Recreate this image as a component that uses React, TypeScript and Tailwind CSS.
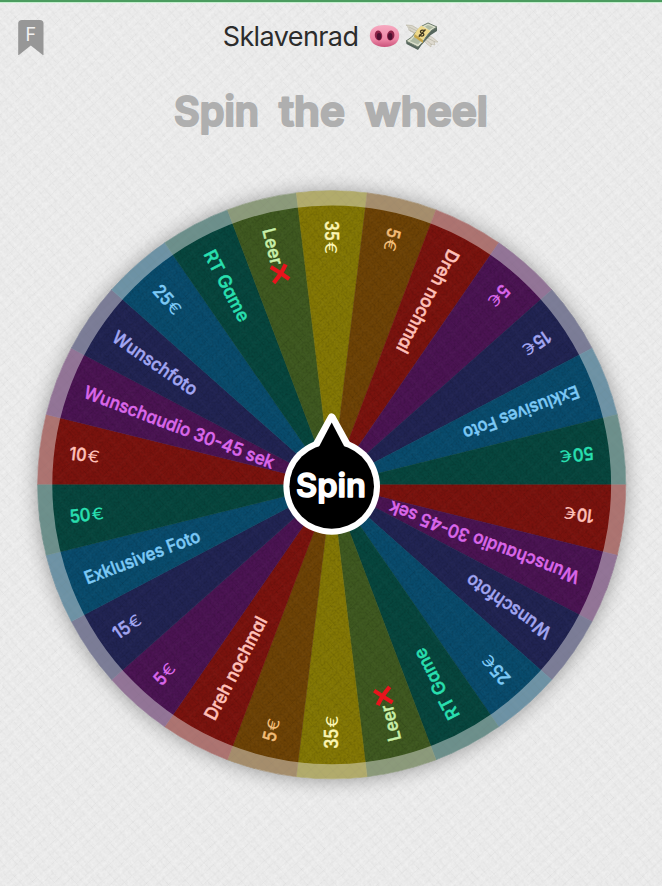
import React from "react";

type Tone = { fill: string; text: string };

const tones: Record<string, Tone> = {
  red: { fill: "#7b130e", text: "#ffc1b9" },
  purple: { fill: "#4b1453", text: "#da67ea" },
  navy: { fill: "#212453", text: "#a2a6f2" },
  blue: { fill: "#094c6d", text: "#7cc9f6" },
  teal: { fill: "#07463e", text: "#29dfaf" },
  green: { fill: "#3f5920", text: "#c9f0aa" },
  yellow: { fill: "#847805", text: "#fcf6b4" },
  brown: { fill: "#6e4306", text: "#f2bd79" },
};

type Slice = { label: string; length: number; tone: string; euro?: boolean; cross?: boolean };

const slices: Slice[] = [
  { label: "10", length: 17, tone: "red", euro: true },
  { label: "Wunschaudio 30-45 sek", length: 202, tone: "purple" },
  { label: "Wunschfoto", length: 99, tone: "navy" },
  { label: "25", length: 20, tone: "blue", euro: true },
  { label: "RT Game", length: 78, tone: "teal" },
  { label: "Leer", length: 37, tone: "green", cross: true },
  { label: "35", length: 20, tone: "yellow", euro: true },
  { label: "5", length: 10, tone: "brown", euro: true },
  { label: "Dreh nochmal", length: 114, tone: "red" },
  { label: "5", length: 10, tone: "purple", euro: true },
  { label: "15", length: 17, tone: "navy", euro: true },
  { label: "Exklusives Foto", length: 122.5, tone: "blue" },
  { label: "50", length: 21, tone: "teal", euro: true },
];

const CX = 331.7;
const CY = 324.8;
const R = 294;
const STEP = 360 / 26;
const half = ((STEP / 2) * Math.PI) / 180;
const wedge = `M0 0L${-R * Math.cos(half)} ${-R * Math.sin(half)}A${R} ${R} 0 0 0 ${-R * Math.cos(half)} ${R * Math.sin(half)}Z`;

function Wedge({ slice, index }: { slice: Slice; index: number }) {
  const tone = tones[slice.tone];
  return (
    <g transform={`translate(${CX} ${CY}) rotate(${(index + 0.5) * STEP})`}>
      <path d={wedge} fill={tone.fill} stroke={tone.fill} strokeWidth="0.4" />
    </g>
  );
}

function Label({ slice, index }: { slice: Slice; index: number }) {
  const tone = tones[slice.tone];
  return (
    <g transform={`translate(${CX} ${CY}) rotate(${(index + 0.5) * STEP})`} fill={tone.text}>
      <text
        x={-264}
        y={6.5}
        textLength={slice.length}
        lengthAdjust="spacingAndGlyphs"
        stroke={tone.text}
        strokeWidth="0.5"
        strokeLinejoin="round"
        className="font-['Inter',sans-serif] text-[18px] font-medium [font-feature-settings:'cv11']"
      >
        {slice.label}
      </text>
      {slice.euro && (
        <text
          x={-263 + slice.length}
          y={6.2}
          textLength={12.5}
          lengthAdjust="spacingAndGlyphs"
          className="font-['Inter',sans-serif] text-[16px] font-normal"
        >
          €
        </text>
      )}
      {slice.cross && (
        <path
          d="M-225 -8Q-217 -2 -210 8M-210 -8Q-219 0 -226 7"
          fill="none"
          stroke="#e8141c"
          strokeWidth="4.2"
        />
      )}
    </g>
  );
}

function Weave({ id, dark, light }: { id: string; dark: string; light: string }) {
  return (
    <pattern id={id} width="22" height="22" patternUnits="userSpaceOnUse" patternTransform="rotate(3)">
      <path
        d="M0 22L22 0M0 11L11 0M11 22L22 11M0 0L22 22M14 0L22 8M0 8L14 22"
        stroke={dark}
        strokeWidth="1"
        fill="none"
      />
      <path d="M0 16L16 0M16 22L22 16M5 0L22 17M0 17L5 22" stroke={light} strokeWidth="1.6" fill="none" />
    </pattern>
  );
}

function Wheel() {
  const all = [...slices, ...slices];
  return (
    <svg width="662" height="650" viewBox="0 0 662 650" className="block shrink-0">
      <defs>
        <Weave id="wheelWeave" dark="rgba(0,0,0,0.06)" light="rgba(255,255,255,0.012)" />
        <filter id="shade" x="-10%" y="-10%" width="120%" height="120%">
          <feGaussianBlur stdDeviation="10" />
        </filter>
        <filter id="grain" x="0" y="0" width="100%" height="100%">
          <feTurbulence type="fractalNoise" baseFrequency="0.5" numOctaves="2" seed="4" />
          <feColorMatrix values="0 0 0 0 0  0 0 0 0 0  0 0 0 0 0  0.9 0 0 0 -0.36" />
          <feComposite in2="SourceGraphic" operator="in" />
        </filter>
      </defs>
      <circle cx={CX} cy={CY + 1} r={R} fill="#000" opacity="0.36" filter="url(#shade)" />
      {all.map((s, i) => (
        <Wedge key={i} slice={s} index={i} />
      ))}
      <circle cx={CX} cy={CY} r={R} fill="url(#wheelWeave)" />
      <circle cx={CX} cy={CY} r="279.5" filter="url(#grain)" opacity="0.3" />
      <circle cx={CX} cy={CY} r="286.9" fill="none" stroke="#e8e8e8" strokeOpacity="0.45" strokeWidth="15" />
      {all.map((s, i) => (
        <Label key={i} slice={s} index={i} />
      ))}
      <path d="M331.7 257.500L348 287H315.400Z" fill="#fff" stroke="#fff" strokeWidth="8" strokeLinejoin="round" />
      <circle cx={CX} cy="326.5" r="48.3" fill="#fff" />
      <circle cx={CX} cy="326.5" r="42.3" />
      <path d="M331.7 262.500L344 286L347 292H316.400L319.400 286Z" />
      <text
        x="296"
        y="337"
        textLength="70"
        lengthAdjust="spacingAndGlyphs"
        fill="#fff"
        stroke="#fff"
        strokeWidth="1.400"
        strokeLinejoin="round"
        className="font-['Inter',sans-serif] text-[32px] font-semibold"
      >
        Spin
      </text>
    </svg>
  );
}

function Snout() {
  return (
    <svg width="31" height="24" viewBox="0 0 31 24">
      <defs>
        <linearGradient id="snout" x1="0" y1="0" x2="0" y2="1">
          <stop offset="0" stopColor="#f6a9c0" />
          <stop offset="0.65" stopColor="#ee87a6" />
          <stop offset="1" stopColor="#c9527a" />
        </linearGradient>
      </defs>
      <path d="M15.500 1C25 1 30.200 5 30.200 11.500S25 23 15.500 23S.8 18 .8 11.500S6 1 15.500 1Z" fill="url(#snout)" />
      <ellipse cx="9.500" cy="11.500" rx="3.700" ry="5" fill="#8d2347" transform="rotate(-8 9.500 11.500)" />
      <ellipse cx="21.700" cy="11.500" rx="3.700" ry="5" fill="#8d2347" transform="rotate(8 21.700 11.500)" />
      <ellipse cx="10" cy="12.500" rx="2.200" ry="3.400" fill="#4c1130" />
      <ellipse cx="21.200" cy="12.500" rx="2.200" ry="3.400" fill="#4c1130" />
    </svg>
  );
}

function FlyingMoney() {
  return (
    <svg width="34" height="29" viewBox="0 0 34 29">
      <path d="M1 3Q7 2 13 7L10 13Q8 9 5 9Q6 7 3 6Q4 4.500 1 3Z" fill="#d9d6ca" stroke="#bab6a5" strokeWidth="0.6" />
      <path d="M22 13Q27 14 33 20L29 20L30 23L26 22L26 25Q21 22 18 17Z" fill="#dedad0" stroke="#bdb8a8" strokeWidth="0.6" />
      <path d="M3 7.500L10 11M4 5L12 9M21 15L30 20M20 17L27 23" stroke="#aaa695" strokeWidth="0.5" />
      <path d="M1 19L1.500 22L13 28Q17 22 21 18Q26 12 32 9V5L20 9Z" fill="#56665d" />
      <path d="M1 19Q7 16 11 10Q16 3 23 1L32 5Q25 8 21 15Q18 21 13 25Z" fill="#dce0cc" stroke="#6f7e70" strokeWidth="1" />
      <path d="M4.500 19Q7 18 9 15L16 19L13 22.500ZM20 4.500L23 3L28.500 5.200L24 8Z" fill="#aebaa4" />
      <path d="M9.500 12Q13 6 16.500 3.800L25.500 9Q22 12 18 18Z" fill="#eed98c" />
      <path d="M9.500 12L18 18L18 21L9 15Z" fill="#c7a74b" />
      <path
        d="M20 8.800Q17 7.200 15.500 9.200Q15.300 11 17.300 11.200Q19.500 11.700 18.500 13.500Q16.500 15 14 12.800M20.500 7.500L13.800 14.800"
        fill="none"
        stroke="#3e3520"
        strokeWidth="1.300"
      />
    </svg>
  );
}

export default function App() {
  return (
    <div className="relative flex h-[886px] w-[662px] flex-col overflow-hidden bg-[#e8e8e8] font-['Inter',sans-serif]">
      <svg width="662" height="886" className="absolute inset-0">
        <defs>
          <Weave id="paperWeave" dark="rgba(0,0,0,0.028)" light="rgba(255,255,255,0.14)" />
          <filter id="paper" x="0" y="0" width="100%" height="100%">
            <feTurbulence type="fractalNoise" baseFrequency="0.35" numOctaves="2" seed="9" />
            <feColorMatrix values="0 0 0 0 1  0 0 0 0 1  0 0 0 0 1  0.9 0 0 0 -0.28" />
          </filter>
        </defs>
        <rect width="662" height="886" fill="url(#paperWeave)" />
        <rect width="662" height="886" filter="url(#paper)" opacity="0.6" />
      </svg>
      <div className="relative h-[3px] shrink-0 border-b border-[#c5f0cf] bg-[#4c9c60]" />
      <header className="relative grid h-[69px] shrink-0 grid-cols-[60px_1fr_60px] items-center">
        <div className="flex pl-[18px]">
          <svg width="26" height="36" viewBox="0 0 26 36">
            <path d="M4 0H22Q25.500 0 25.500 3.500V34.500Q25.500 35.500 24.500 34.800L12.800 25.500L1.200 34.800Q.2 35.500 .2 34.500V3.500Q.2 0 4 0Z" fill="#979797" />
            <text x="12.900" y="21" textAnchor="middle" fill="#f2f2f2" className="text-[18px]">
              F
            </text>
          </svg>
        </div>
        <div className="flex h-full items-center justify-center pb-px">
          <h1 className="whitespace-nowrap text-[27px] leading-[44px] tracking-[-0.6px] text-[#2c2c2c]">
            Sklavenrad
          </h1>
          <span className="ml-[11px] flex shrink-0 items-center gap-[5px] pb-0.5">
            <Snout />
            <FlyingMoney />
          </span>
        </div>
      </header>
      <div className="relative flex h-[88px] shrink-0 justify-center">
        <svg width="318" height="80" viewBox="0 0 318 80">
          <g
            fill="#afafaf"
            stroke="#afafaf"
            strokeWidth="2.200"
            strokeLinejoin="round"
            className="text-[41px] font-semibold"
          >
            <text x="2" y="53.500" textLength="85" lengthAdjust="spacingAndGlyphs">Spin</text>
            <text x="107" y="53.500" textLength="66" lengthAdjust="spacingAndGlyphs">the</text>
            <text x="193" y="53.500" textLength="123" lengthAdjust="spacingAndGlyphs">wheel</text>
          </g>
        </svg>
      </div>
      <div className="relative">
        <Wheel />
      </div>
    </div>
  );
}
